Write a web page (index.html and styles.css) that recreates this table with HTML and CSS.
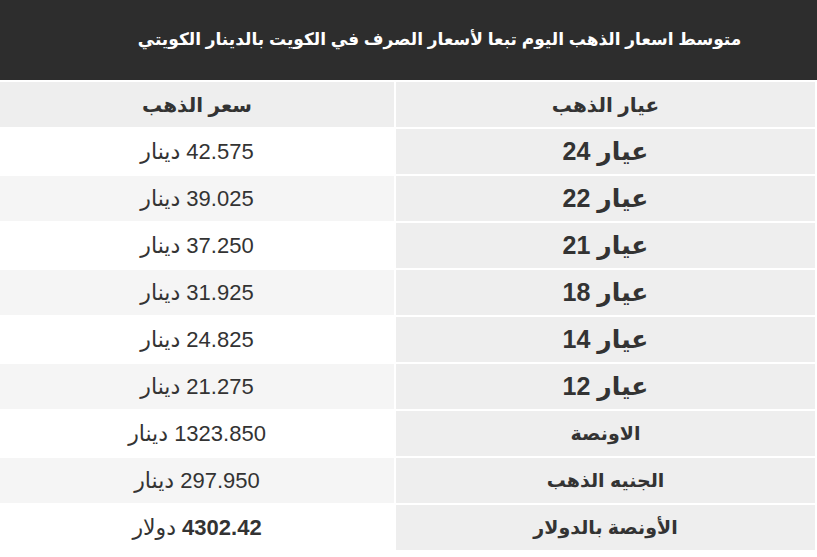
FILE: index.html
```html
<!DOCTYPE html>
<html lang="ar" dir="rtl">
<head>
<meta charset="utf-8">
<link rel="stylesheet" href="styles.css">
</head>
<body>
<div class="title"><span>متوسط اسعار الذهب اليوم تبعا لأسعار الصرف في الكويت بالدينار الكويتي</span></div>
<div class="grid">
  <div class="cell head"><span>عيار الذهب</span></div>
  <div class="cell head left"><span>سعر الذهب</span></div>

  <div class="cell key"><span>عيار 24</span></div>
  <div class="cell val odd"><span>42.575 دينار</span></div>

  <div class="cell key"><span>عيار 22</span></div>
  <div class="cell val even"><span>39.025 دينار</span></div>

  <div class="cell key"><span>عيار 21</span></div>
  <div class="cell val odd"><span>37.250 دينار</span></div>

  <div class="cell key"><span>عيار 18</span></div>
  <div class="cell val even"><span>31.925 دينار</span></div>

  <div class="cell key"><span>عيار 14</span></div>
  <div class="cell val odd"><span>24.825 دينار</span></div>

  <div class="cell key"><span>عيار 12</span></div>
  <div class="cell val even"><span>21.275 دينار</span></div>

  <div class="cell key small"><span>الاونصة</span></div>
  <div class="cell val odd"><span>1323.850 دينار</span></div>

  <div class="cell key small"><span>الجنيه الذهب</span></div>
  <div class="cell val even"><span>297.950 دينار</span></div>

  <div class="cell key small"><span>الأونصة بالدولار</span></div>
  <div class="cell val odd"><span><b>4302.42</b> دولار</span></div>
</div>
</body>
</html>
```
FILE: styles.css
```css
html, body {
  margin: 0;
  padding: 0;
  background: #fff;
}
body {
  width: 817px;
  height: 557px;
  overflow: hidden;
  font-family: "Liberation Sans", "DejaVu Sans", sans-serif;
  color: #333;
}
.title {
  height: 80px;
  background: #2d2d2d;
  color: #fff;
  font-weight: bold;
  font-size: 17px;
  display: flex;
  align-items: center;
  justify-content: center;
  padding: 0 0 2px 62px;
  box-sizing: border-box;
}
.grid {
  display: grid;
  grid-template-columns: 419px 394px;
  grid-auto-rows: 45px;
  gap: 2px;
  padding: 2px 2px 0 0;
}
.cell {
  display: flex;
  align-items: center;
  justify-content: center;
  font-size: 22px;
}
.head {
  background: #eee;
  font-weight: bold;
  font-size: 20px;
}
.key {
  background: #eee;
  font-weight: bold;
  font-size: 25px;
}
.key.small {
  font-size: 19px;
}
.val.odd { background: #fff; }
.val.even { background: #f5f5f5; }
```
